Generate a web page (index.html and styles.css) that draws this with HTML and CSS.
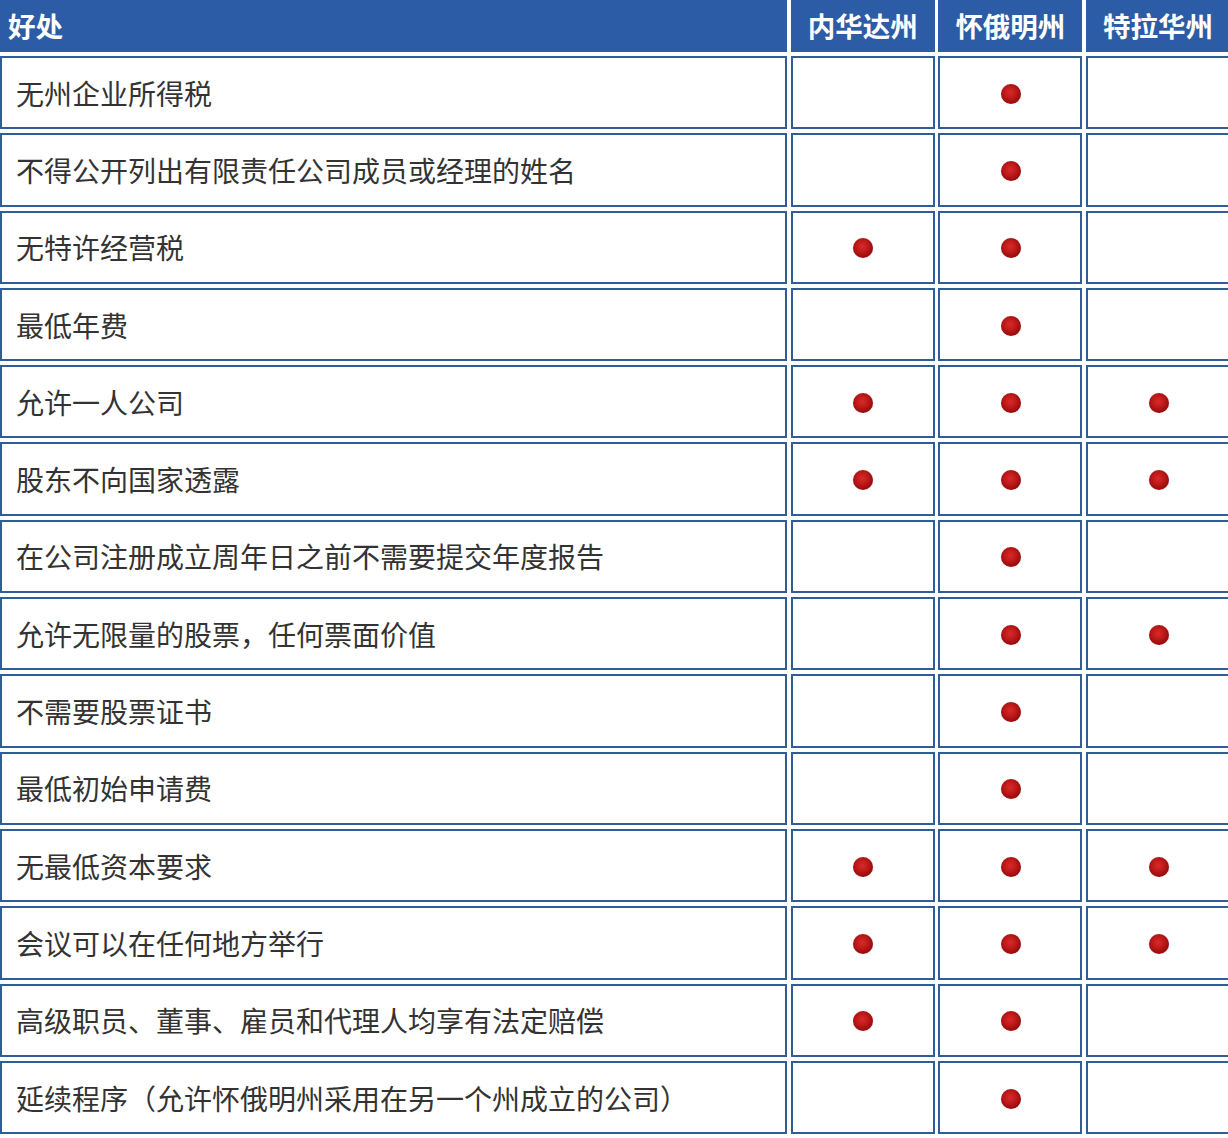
FILE: index.html
```html
<!DOCTYPE html>
<html lang="zh-CN">
<head>
<meta charset="utf-8">
<title>好处比较</title>
<link rel="stylesheet" href="styles.css">
</head>
<body>
<div class="wrap">
<div class="compare" role="table">
  <div class="row" role="row">
    <div class="th th-main" role="columnheader">好处</div>
    <div class="th" role="columnheader">内华达州</div>
    <div class="th" role="columnheader">怀俄明州</div>
    <div class="th" role="columnheader">特拉华州</div>
  </div>
  <div class="row" role="row"><div class="td label" role="cell">无州企业所得税</div><div class="td" role="cell"></div><div class="td" role="cell"><span class="dot"></span></div><div class="td" role="cell"></div></div>
  <div class="row" role="row"><div class="td label" role="cell">不得公开列出有限责任公司成员或经理的姓名</div><div class="td" role="cell"></div><div class="td" role="cell"><span class="dot"></span></div><div class="td" role="cell"></div></div>
  <div class="row" role="row"><div class="td label" role="cell">无特许经营税</div><div class="td" role="cell"><span class="dot"></span></div><div class="td" role="cell"><span class="dot"></span></div><div class="td" role="cell"></div></div>
  <div class="row" role="row"><div class="td label" role="cell">最低年费</div><div class="td" role="cell"></div><div class="td" role="cell"><span class="dot"></span></div><div class="td" role="cell"></div></div>
  <div class="row" role="row"><div class="td label" role="cell">允许一人公司</div><div class="td" role="cell"><span class="dot"></span></div><div class="td" role="cell"><span class="dot"></span></div><div class="td" role="cell"><span class="dot"></span></div></div>
  <div class="row" role="row"><div class="td label" role="cell">股东不向国家透露</div><div class="td" role="cell"><span class="dot"></span></div><div class="td" role="cell"><span class="dot"></span></div><div class="td" role="cell"><span class="dot"></span></div></div>
  <div class="row" role="row"><div class="td label" role="cell">在公司注册成立周年日之前不需要提交年度报告</div><div class="td" role="cell"></div><div class="td" role="cell"><span class="dot"></span></div><div class="td" role="cell"></div></div>
  <div class="row" role="row"><div class="td label" role="cell">允许无限量的股票，任何票面价值</div><div class="td" role="cell"></div><div class="td" role="cell"><span class="dot"></span></div><div class="td" role="cell"><span class="dot"></span></div></div>
  <div class="row" role="row"><div class="td label" role="cell">不需要股票证书</div><div class="td" role="cell"></div><div class="td" role="cell"><span class="dot"></span></div><div class="td" role="cell"></div></div>
  <div class="row" role="row"><div class="td label" role="cell">最低初始申请费</div><div class="td" role="cell"></div><div class="td" role="cell"><span class="dot"></span></div><div class="td" role="cell"></div></div>
  <div class="row" role="row"><div class="td label" role="cell">无最低资本要求</div><div class="td" role="cell"><span class="dot"></span></div><div class="td" role="cell"><span class="dot"></span></div><div class="td" role="cell"><span class="dot"></span></div></div>
  <div class="row" role="row"><div class="td label" role="cell">会议可以在任何地方举行</div><div class="td" role="cell"><span class="dot"></span></div><div class="td" role="cell"><span class="dot"></span></div><div class="td" role="cell"><span class="dot"></span></div></div>
  <div class="row" role="row"><div class="td label" role="cell">高级职员、董事、雇员和代理人均享有法定赔偿</div><div class="td" role="cell"><span class="dot"></span></div><div class="td" role="cell"><span class="dot"></span></div><div class="td" role="cell"></div></div>
  <div class="row" role="row"><div class="td label" role="cell">延续程序（允许怀俄明州采用在另一个州成立的公司）</div><div class="td" role="cell"></div><div class="td" role="cell"><span class="dot"></span></div><div class="td" role="cell"></div></div>
</div>
</div>
</body>
</html>
```

FILE: styles.css
```css
html, body {
  margin: 0;
  padding: 0;
  background: #ffffff;
  overflow: hidden;
}

body {
  font-family: "Noto Sans CJK SC", "Noto Sans", "Liberation Sans", sans-serif;
  color: #333333;
}

.wrap {
  width: 1228px;
  overflow: hidden;
}

.compare {
  display: grid;
  grid-template-columns: 787px 144px 144px 144px;
  grid-template-rows: 52px repeat(14, 73.3px);
  column-gap: 3.7px;
  row-gap: 4px;
  width: 1230.1px;
}

.row {
  display: contents;
}

.th,
.td {
  box-sizing: border-box;
  display: flex;
  align-items: center;
  justify-content: center;
  line-height: 1;
}

.th {
  background: #2c5ca6;
  color: #ffffff;
  font-weight: 700;
  font-size: 27.5px;
}

.th-main {
  justify-content: flex-start;
  padding-left: 8px;
}

.td {
  border: 2px solid #315d97;
  font-size: 28px;
}

.td.label {
  justify-content: flex-start;
  padding-left: 14px;
  color: #333333;
}

.dot {
  display: block;
  width: 20px;
  height: 20px;
  margin: 2px 0 0 1px;
  border-radius: 50%;
  background: radial-gradient(circle at 46% 42%, #d92a2a 0%, #c01a1a 35%, #990c0c 68%, #680505 100%);
  box-shadow: 0 0 1px rgba(110, 10, 10, 0.35);
}
```
